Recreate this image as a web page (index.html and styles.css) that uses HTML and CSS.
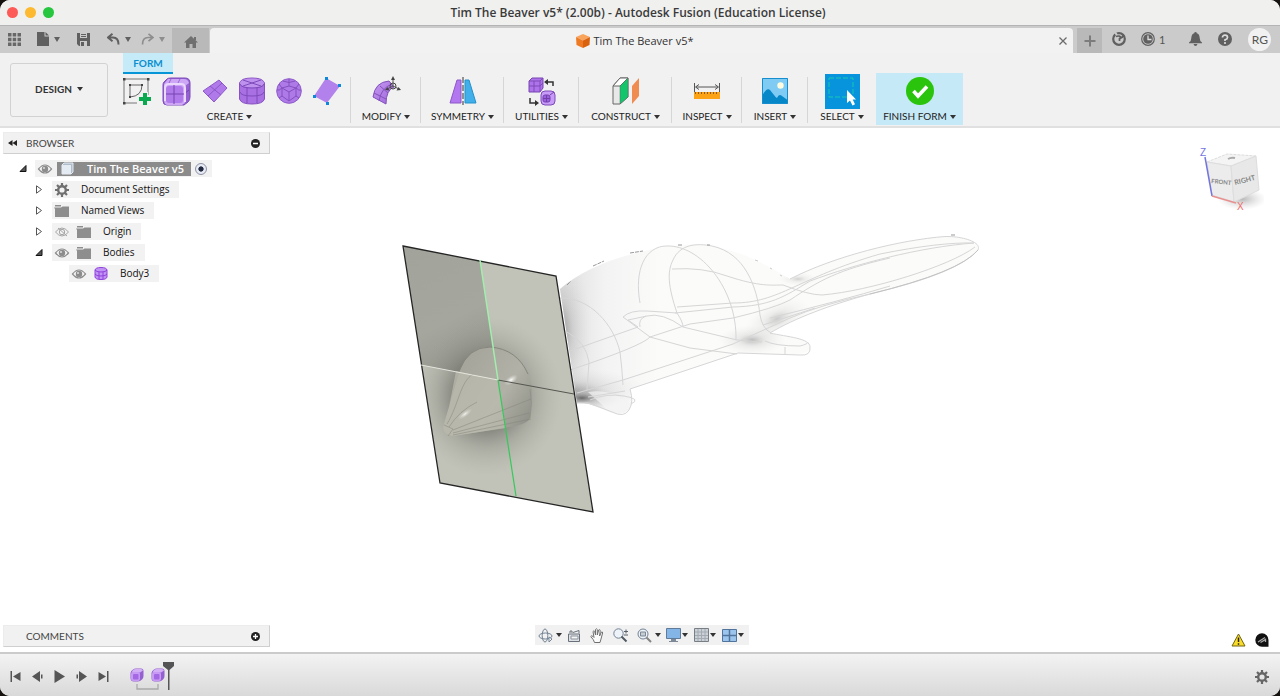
FILE: index.html
```html
<!DOCTYPE html>
<html lang="en">
<head>
<meta charset="utf-8">
<title>Tim The Beaver v5* (2.00b) - Autodesk Fusion (Education License)</title>
<link rel="stylesheet" href="styles.css">
</head>
<body>
<svg class="defs" aria-hidden="true">
  <defs>
    <linearGradient id="purple" x1="0" y1="0" x2="1" y2="1"><stop offset="0" stop-color="#c79bf2"/><stop offset="1" stop-color="#9b62d8"/></linearGradient>
    <symbol id="eye" viewBox="0 0 14 10"><path d="M.5 5Q7-3 13.5 5Q7 13 .5 5Z" fill="none" stroke="#8c8c8c" stroke-width="1.2"/><circle cx="7" cy="5" r="3.2" fill="#8c8c8c"/><circle cx="6" cy="4" r="1" fill="#ddd"/></symbol>
    <symbol id="eye-off" viewBox="0 0 14 10"><path d="M.5 5Q7-3 13.5 5Q7 13 .5 5Z" fill="none" stroke="#a5a5a5"/><circle cx="7" cy="5" r="2.7" fill="none" stroke="#a5a5a5"/><path d="M3 1l9 8" stroke="#a5a5a5"/></symbol>
    <symbol id="folder" viewBox="0 0 16 12"><path d="M1 0h6v1.500H1zM0 2.500h7l1.500-1H15V12H1V4z" fill="#8e8e8e"/></symbol>
    <symbol id="gear" viewBox="0 0 14 14"><circle cx="7" cy="7" r="3.800" fill="none" stroke="currentColor" stroke-width="2.400"/><path d="M7 0v3M7 11v3M0 7h3M11 7h3M2 2l2.200 2.200M9.800 9.800L12 12M12 2L9.800 4.200M4.200 9.800L2 12" stroke="currentColor" stroke-width="2.200"/></symbol>
    <symbol id="formbox" viewBox="0 0 14 14"><path d="M3 1.500Q4 .5 6 .5h5q2.500 0 2.500 2.500v5q0 2-1.500 3.500Q10 13.500 8 13.500H4Q.5 13.500.5 10V5q0-2 2.500-3.500z" fill="#9560d0"/><path d="M3 2Q4 1 6 1h5q1.500 0 2 1.500L10 4.500H1.500z" fill="#d3b0f6"/><rect x="1" y="4" width="9" height="9" rx="2" fill="#c79bf3"/><rect x="3" y="6" width="5.500" height="5.500" rx="1" fill="#a468e4"/></symbol>
  </defs>
</svg>
<div class="window">
  <header class="titlebar">
    <div class="lights"><button class="light red" aria-label="Close"></button><button class="light amber" aria-label="Minimise"></button><button class="light green" aria-label="Zoom"></button></div>
    <h1>Tim The Beaver v5* (2.00b) - Autodesk Fusion (Education License)</h1>
  </header>

  <div class="appbar">
    <div class="quick">
      <button aria-label="Data panel"><svg width="13" height="13" viewBox="0 0 13 13"><path d="M0 0h3.500v3.500H0zM4.700 0h3.500v3.500H4.700zM9.500 0H13v3.500H9.500zM0 4.700h3.500v3.500H0zM4.700 4.700h3.500v3.500H4.700zM9.500 4.700H13v3.500H9.500zM0 9.500h3.500V13H0zM4.700 9.500h3.500V13H4.700zM9.500 9.500H13V13H9.500z" fill="#686868"/></svg></button>
      <button class="file" aria-label="File"><svg width="12" height="14" viewBox="0 0 12 14"><path d="M0 0h7.500v4.500H12V14H0zM8.500 0L12 3.500H8.500z" fill="#606060"/></svg><i class="caret"></i></button>
      <button class="save" aria-label="Save"><svg width="13" height="13" viewBox="0 0 13 13"><path d="M0 0h13v13H2L0 11z" fill="#606060"/><path d="M3 0h7v5H3zM3 8h7v5H3z" fill="#cbcbcb"/><path d="M4 1.500h5M4 3.500h5" stroke="#606060"/><path d="M4 9h3v4H4z" fill="#606060"/></svg></button>
      <button class="undo" aria-label="Undo"><svg width="13" height="12" viewBox="0 0 13 12"><path d="M5.500 .8L1 4.500l4.500 3.700M1.500 4.500H6q5.500 0 5.500 7" fill="none" stroke="#606060" stroke-width="2"/></svg><i class="caret"></i></button>
      <button class="redo" aria-label="Redo"><svg width="13" height="12" viewBox="0 0 13 12"><path d="M7.500 .8L12 4.500 7.500 8.200M11.500 4.500H7q-5.500 0-5.500 7" fill="none" stroke="#8e8e8e" stroke-width="1.700"/></svg><i class="caret faint"></i></button>
    </div>
    <button class="home" aria-label="Home"><svg width="14" height="12" viewBox="0 0 14 12"><path d="M7 0L14 6.500h-2V12H8.500V8h-3v4H2V6.500H0zM10 1h2v3h-2z" fill="#707070"/></svg></button>
    <div class="doctab">
      <svg width="14" height="14" viewBox="0 0 14 14"><path d="M7 0l7 3-7 3.500L0 3z" fill="#f9a45c"/><path d="M0 3l7 3.500V14l-6.500-3z" fill="#ef7a24"/><path d="M14 3L7 6.500V14l6.500-3z" fill="#d9620f"/></svg>
      <span>Tim The Beaver v5*</span>
      <button class="close" aria-label="Close tab"><svg width="8" height="8" viewBox="0 0 8 8"><path d="M.5.500l7 7M7.500.500l-7 7" stroke="#6c6c6c" stroke-width="1.300"/></svg></button>
    </div>
    <button class="plus" aria-label="New design"><svg width="12" height="12" viewBox="0 0 12 12"><path d="M6 .500v11M.500 6h11" stroke="#7c7c7c" stroke-width="2"/></svg></button>
    <div class="account">
      <button aria-label="Extensions"><svg width="14" height="14" viewBox="0 0 14 14"><circle cx="7" cy="7" r="5.800" fill="none" stroke="#606060" stroke-width="2.200"/><path d="M7 7L3 0" stroke="#cbcbcb" stroke-width="2"/><path d="M4 4.500q4-1.500 5 1.500l3-3M7.500 9V6.500L11 5" fill="none" stroke="#606060" stroke-width="1.700"/></svg></button>
      <button class="jobs" aria-label="Job status"><svg width="14" height="14" viewBox="0 0 14 14"><circle cx="7" cy="7" r="6.300" fill="none" stroke="#606060" stroke-width="1.200"/><circle cx="7" cy="7" r="4.800" fill="#606060"/><path d="M7 3.500V7.500h3.500" stroke="#ddd" stroke-width="1.300" fill="none"/></svg>1</button>
      <button class="bell" aria-label="Notifications"><svg width="13" height="14" viewBox="0 0 13 14"><path d="M6.500 0q1.200 0 1.300 1.200Q10.500 2 10.700 6q0 3 2.300 4.500v.7H0v-.7Q2.300 9 2.300 6 2.500 2 5.200 1.200 5.300 0 6.500 0zM4.500 12h4q-.5 2-2 2t-2-2z" fill="#606060"/></svg></button>
      <button class="help" aria-label="Help"><svg width="14" height="14" viewBox="0 0 14 14"><circle cx="7" cy="7" r="7" fill="#606060"/><path d="M4.500 5.500Q4.500 3.200 7 3.200t2.500 2.200Q9.500 7 7 7.800V9" stroke="#ddd" stroke-width="1.700" fill="none"/><circle cx="7" cy="11" r="1.100" fill="#ddd"/></svg></button>
      <button class="avatar">RG</button>
    </div>
  </div>

  <div class="ribbon">
    <button class="workspace">DESIGN<i class="caret dark"></i></button>
    <div class="tools">
      <div class="tabs" role="tablist"><button class="formtab" role="tab" aria-selected="true">FORM</button></div>
      <div class="groups">
        <section class="group create">
          <div class="icons">
            <button aria-label="Create sketch"><svg width="29" height="29" viewBox="0 0 29 29"><path d="M2 2h24v24H2z" fill="none" stroke="#777"/><path d="M1 1h2.500v2.500H1zM25 1h2.500v2.500H25zM1 25h2.500v2.500H1z" fill="#444"/><path d="M8 20V8h12Q20 19 8 20z" fill="none" stroke="#666"/><path d="M7 7h2v2H7zM19 7h2v2h-2zM7 19h2v2H7z" fill="#444"/><path d="M19 15h7v3h3v11H15V18h4z" fill="#f1f1f1"/><path d="M21 16h4v4h4v4h-4v4h-4v-4h-4v-4h4z" fill="#0aa84f"/></svg></button>
            <button aria-label="Box"><svg width="29" height="29" viewBox="0 0 29 29"><path d="M5 2q1-1 4-1h14q5 0 5 5v14q0 3-2 5l-4 3H5q-4 0-4-4V8q0-2 1-3z" fill="#9560d2" stroke="#7d4cba"/><path d="M2 7l4-5h16q4 0 5 4l-4 3v17l-3 2H6q-4 0-4-5z" fill="#cda7f5"/><rect x="4" y="9" width="17" height="17" rx="3" fill="#b07aea"/><path d="M12 8v19M2 17h20l5-4" fill="none" stroke="#7642b2"/><path d="M9 2L6 8M18 2l-3 6M27 8l-4 2" fill="none" stroke="#9a68d3"/><path d="M3 24V11q0-4 4-4h12q4 0 4 4v14" fill="none" stroke="#ead8fd" stroke-width="2"/></svg></button>
            <button aria-label="Plane"><svg width="26" height="26" viewBox="0 0 26 26"><path d="M17 2l8 8-13 14L1 13z" fill="#b07aea" stroke="#8e59ca"/><path d="M8 8l11 9M6 18L20 5" stroke="#8a57c5"/></svg></button>
            <button aria-label="Cylinder"><svg width="26" height="28" viewBox="0 0 26 28"><path d="M.5 6Q2 1 13 1t12.500 5v16Q24 27 13 27T.5 22z" fill="#a870e2" stroke="#8752c1"/><ellipse cx="13" cy="6" rx="12" ry="4.500" fill="#bd91ed"/><path d="M1 7q1 4 12 4t12-4M1 15q1 4 12 4t12-4M8 10v16M18 10v16M4 3l18 6M22 3L4 9" fill="none" stroke="#7f4bbb"/></svg></button>
            <button aria-label="Sphere"><svg width="26" height="26" viewBox="0 0 26 26"><circle cx="13" cy="13" r="12.300" fill="#ae7ae8" stroke="#8e5cc9"/><path d="M13 8l7 2v8l-7 5-7-5v-8zM13 8V1M13 23v-9M6 10l7 4 7-4M6 10L3 6M20 10l3-4M6 18l-3 2M20 18l3 2M7 3q6 3 12 0M1 12q2 1 5-2M25 12q-2 1-5-2" fill="none" stroke="#8450bd"/></svg></button>
            <button aria-label="Face"><svg width="28" height="28" viewBox="0 0 28 28"><path d="M13 1l14 8-13 17L1 19z" fill="#b381ec"/><path d="M12 0h3v3h-3zM25 7h3v3h-3zM0 18h3v3H0zM13 25h3v3h-3z" fill="#0d86db"/></svg></button>
          </div>
          <button class="label">CREATE<i class="caret dark"></i></button>
        </section>
        <section class="group w70"><div class="icons"><button aria-label="Edit form"><svg width="29" height="30" viewBox="0 0 29 30"><path d="M1 21Q3 6 17 5l5 6q-8 3-8 17z" fill="url(#purple)" stroke="#8250bd"/><path d="M8 10l8 7M7 25Q9 12 20 8M2 17l12 6" fill="none" stroke="#8450bd"/><circle cx="21" cy="10" r="3" fill="none" stroke="#444"/><path d="M21 10V3M21 10l6 3M21 10l-6 3" stroke="#555"/><path d="M21 0l-2 4h4zM29 14l-4.500.500 2-3.500zM13 14l4.500.500-2-3.500z" fill="#444"/></svg></button></div><button class="label">MODIFY<i class="caret dark"></i></button></section>
        <section class="group w83"><div class="icons"><button aria-label="Mirror"><svg width="28" height="28" viewBox="0 0 28 28"><path d="M8 3h4v23H1z" fill="#b377f0" stroke="#8c59c8"/><path d="M16 3h4l7 23H16z" fill="#41afe9" stroke="#2491cc"/><path d="M14 0v28" stroke="#333" stroke-dasharray="6 2"/></svg></button></div><button class="label">SYMMETRY<i class="caret dark"></i></button></section>
        <section class="group w75"><div class="icons"><button aria-label="Convert"><svg width="28" height="29" viewBox="0 0 28 29"><path d="M1 4l3-3h11v10l-3 4H1z" fill="#ae72ea" stroke="#7745b0"/><path d="M1 4h11v11M12 4l3-3M6 4v11M1 9h11l3-3" fill="none" stroke="#7d4ab8"/><rect x="13" y="14" width="14" height="14" rx="4" fill="#c99bf8" stroke="#7e4ab9"/><rect x="15" y="18" width="7" height="7" rx="2" fill="#9c60df" stroke="#7441b0"/><path d="M18.500 18v7M15 21.500h7M22 18l4-3" stroke="#7140a9"/><path d="M25 9V5h-6M2 21v5h6" fill="none" stroke="#333" stroke-width="1.500"/><path d="M20 2v6l-4-3zM7 23v6l4-3z" fill="#333"/></svg></button></div><button class="label">UTILITIES<i class="caret dark"></i></button></section>
        <section class="group w93"><div class="icons"><button aria-label="Offset plane"><svg width="28" height="28" viewBox="0 0 28 28"><path d="M1 9l7-8h8v19l-8 7H1z" fill="#e8e8e8" stroke="#666"/><path d="M8 9H1l7-8h8z" fill="#fff" stroke="#666"/><path d="M8 9l8-8v19l-8 7z" fill="#13c56b" stroke="#666" stroke-width=".5"/><path d="M20 9l7-8v18l-7 8z" fill="#f08b51"/></svg></button></div><button class="label">CONSTRUCT<i class="caret dark"></i></button></section>
        <section class="group w70"><div class="icons"><button aria-label="Measure"><svg width="26" height="17" viewBox="0 0 26 17"><path d="M.500 0v9M25.500 0v9M2 4h22M5 1.500L1.500 4 5 6.500M21 1.500L24.500 4 21 6.500" fill="none" stroke="#555"/><path d="M0 9h26v7H0z" fill="#fba315"/><path d="M1 10h24" stroke="#8a5a10" stroke-width="2" stroke-dasharray="1 2"/></svg></button></div><button class="label">INSPECT<i class="caret dark"></i></button></section>
        <section class="group w66"><div class="icons"><button aria-label="Canvas"><svg width="26" height="26" viewBox="0 0 26 26"><path d="M0 0h26v26H0z" fill="#7fcbf3"/><path d="M.500 17Q5 9 8 12l4 5q2 3 3 3 2-5 5-2l5.500 4v3.500H.500z" fill="#0587c8"/><circle cx="18.500" cy="7.500" r="3.200" fill="#fffbe0"/><path d="M.500.500h25v25H.500z" fill="none" stroke="#168dcc"/></svg></button></div><button class="label">INSERT<i class="caret dark"></i></button></section>
        <section class="group w68 last"><div class="icons"><button aria-label="Select"><svg width="35" height="35" viewBox="0 0 35 35"><path d="M0 0h35v35H0z" fill="#0794dc"/><path d="M4 4h24v19H4z" fill="none" stroke="#19c8b1" stroke-dasharray="5 2"/><path d="M22 16v13l3-2.500 2.500 5 2.500-1.200-2.300-4.800H31z" fill="#fff"/></svg></button></div><button class="label">SELECT<i class="caret dark"></i></button></section>
        <section class="group finish last"><div class="icons"><button aria-label="Finish form"><svg width="28" height="28" viewBox="0 0 28 28"><circle cx="14" cy="14" r="14" fill="#2ac40c"/><path d="M7.500 14l4.500 5 9-9.500" fill="none" stroke="#fff" stroke-width="3.600"/></svg></button></div><button class="label">FINISH FORM<i class="caret dark"></i></button></section>
      </div>
    </div>
  </div>

  <main class="viewport">
    <svg class="model" width="600" height="290" viewBox="390 230 600 290" role="img" aria-label="Beaver model">
      <defs>
        <linearGradient id="bodyfill" x1="560" y1="0" x2="660" y2="0" gradientUnits="userSpaceOnUse"><stop offset="0" stop-color="#dedede"/><stop offset=".45" stop-color="#f3f3f3"/><stop offset="1" stop-color="#fbfbfa"/></linearGradient>
        <linearGradient id="quad" x1="410" y1="250" x2="470" y2="370" gradientUnits="userSpaceOnUse"><stop offset="0" stop-color="#a2a39a"/><stop offset=".6" stop-color="#a5a69d"/><stop offset="1" stop-color="#94958c"/></linearGradient>
        <radialGradient id="halo"><stop offset=".35" stop-color="#66675f" stop-opacity=".8"/><stop offset=".65" stop-color="#85867d" stop-opacity=".38"/><stop offset="1" stop-color="#a6a79d" stop-opacity="0"/></radialGradient>
        <radialGradient id="smoke"><stop offset="0" stop-color="#555" stop-opacity=".85"/><stop offset=".4" stop-color="#999" stop-opacity=".4"/><stop offset="1" stop-color="#ccc" stop-opacity="0"/></radialGradient>
        <linearGradient id="head" x1="455" y1="360" x2="535" y2="415" gradientUnits="userSpaceOnUse"><stop offset="0" stop-color="#a3a399"/><stop offset=".6" stop-color="#b1b1a7"/><stop offset="1" stop-color="#8f9087"/></linearGradient>
        <radialGradient id="shine"><stop offset="0" stop-color="#fff"/><stop offset="1" stop-color="#d5d5cd" stop-opacity="0"/></radialGradient>
        <clipPath id="bodyclip"><path d="M560 289C585 267 628 251 680 245C725 241 764 263 790 279C835 256 900 240 945 236.500C962 236 982 242 978 250C960 270 915 283 870 294C830 305 795 318 770 333C787 339 810 336 810 349C808 357 770 355 738 353L630 389C634 402 632 413 618 414C602 411 593 402 577 403z"/></clipPath>
        <clipPath id="planeclip"><path d="M403 246l153 30 37 236-153-29z"/></clipPath>
      </defs>
      <g clip-path="url(#bodyclip)">
        <path d="M550 230h440v190H550z" fill="url(#bodyfill)"/>
        <ellipse cx="574" cy="390" rx="72" ry="22" fill="url(#smoke)" opacity=".5"/>
        <ellipse cx="582" cy="398" rx="38" ry="13" fill="url(#smoke)"/>
        <ellipse cx="560" cy="330" rx="32" ry="75" fill="url(#smoke)" opacity=".7"/>
        <ellipse cx="752" cy="340" rx="34" ry="15" fill="url(#smoke)" opacity=".45"/>
        <ellipse cx="777" cy="319" rx="35" ry="18" fill="url(#smoke)" opacity=".35" transform="rotate(-25 777 319)"/>
        <ellipse cx="798" cy="279" rx="20" ry="7" fill="url(#smoke)" opacity=".3"/>
        <path d="M588 392q25-4 44 14l-4 8-20-4z" fill="#f4f4f4" opacity=".7"/>
      </g>
      <g fill="none" stroke="#d6d6d6" stroke-width="1">
        <path d="M640 303C634 270 645 246 667 246C700 245 737 288 736 340"/>
        <path d="M677 313C668 286 667 272 673 260C680 244 697 243 712 246C745 253 757 287 760 315Q762 328 771 333"/>
        <path d="M672 269Q703 267 727 276C760 287 772 285 783 285Q809 295 822 295C870 291 950 266 975 247"/>
        <path d="M677 307L733 303C780 303 797 278 880 254Q940 242 974 243"/>
        <path d="M675 313L733 307C770 306 784 297 810 281C856 264 920 247 974 243"/>
        <path d="M623 317Q630 310 647 311L677 313Q683 322 683 327M623 317L650 337Q642 346 570 370M628 320L647 316Q662 312 683 327L737 340L762 342"/>
        <path d="M640 327Q638 319 646 316M570 351L638 327L628 320M650 337L690 324L733 318Q775 308 790 300C820 280 838 270 890 258"/>
        <path d="M650 337L690 348L737 354M577 393L623 380L733 344L790 318Q820 305 870 294"/>
        <path d="M560 298C590 297 614 325 620 352Q622 368 623 385M567 332Q586 342 589 362L587 390M590 400Q606 393 624 396T631 404M588 397L625 391"/>
        <path d="M790 279C835 256 900 240 945 236.500C962 236 982 242 978 250C960 270 915 283 870 294C830 305 795 318 770 333C787 337 810 338 810 347Q811 356 800 355L738 353M770 318Q840 301 890 286M763 325Q785 318 815 308M765 341Q775 346 800 346Q808 344 808 342M785 347v7M738 353L630 389Q634 402 629 410T612 412Q600 407 588 403H577"/>
      </g>
      <path d="M870 294Q960 272 978 250" fill="none" stroke="#c2c2c2"/>
      <path d="M567 285l4-4M593 266l11-5M630 253l13-2M678 245h4M707 245h3M951 235h4" stroke="#999" stroke-dasharray="4 1"/>
      <path d="M755 260l3 1M770 268l2 1M780 275l2 1" stroke="#ccc"/>
      <g clip-path="url(#planeclip)">
        <path d="M403 246l153 30 37 236-153-29z" fill="#c1c2b8"/>
        <path d="M403 246l77 14 18 120-77-15z" fill="url(#quad)"/>
        <ellipse cx="486" cy="396" rx="76" ry="80" fill="url(#halo)"/>
      </g>
      <path d="M443 427L449 407L458 376Q467 346 490 347C515 348 531 367 532 392L530 418Q528 424 510 427L453 436Q443 435 443 427z" fill="url(#head)"/>
      <path d="M443 427L449 407L456 371L498 380L506 428L453 436Q443 435 443 427z" fill="#bdbcaf" opacity=".7"/>
      <path d="M459 371Q468 347 490 347Q517 349 528 374" fill="none" stroke="#85867d"/>
      <path d="M447 424C459 404 460 382 473 374M449 427Q459 411 477 402M453 430L531 399M453 433L529 413M453 435L531 419M444 425l9 4-5 7M530 389Q533 403 530 418" fill="none" stroke="#85867d" stroke-width="1" opacity=".5"/>
      <ellipse cx="465" cy="414" rx="9" ry="3" transform="rotate(-36 465 414)" fill="url(#shine)" opacity=".8"/>
      <ellipse cx="511" cy="380" rx="8" ry="4" transform="rotate(-35 511 380)" fill="url(#shine)"/>
      <path d="M403 246l153 30 37 236-153-29z" fill="none" stroke="#252525" stroke-width="1.300"/>
      <path d="M421 365l77 15" stroke="#e5e6dd"/><path d="M498 380l76 14" stroke="#55564f"/>
      <path d="M480 260l18 120" stroke="#a2efad" stroke-width="1.500"/><path d="M498 380l18 116" stroke="#32ca59" stroke-width="1.200"/>
    </svg>

    <div class="topside">
      <section class="browser">
        <header class="panel"><svg class="collapse" width="9" height="6" viewBox="0 0 9 6"><path d="M4.500 0v6L0 3zM9 0v6L4.500 3z" fill="#222"/></svg><h2>BROWSER</h2><button class="round" aria-label="Hide browser"><svg width="9" height="9" viewBox="0 0 9 9"><circle cx="4.500" cy="4.500" r="4.500" fill="#222"/><path d="M2 4.500h5" stroke="#fff" stroke-width="1.500"/></svg></button></header>
        <ul class="tree">
          <li class="l0"><svg class="tw" width="7" height="7" viewBox="0 0 7 7"><path d="M6.500.500v6h-6z" fill="#555" stroke="#111"/></svg><div class="chip root"><svg width="14" height="10"><use href="#eye"/></svg><span class="sel"><svg width="13" height="13" viewBox="0 0 13 13"><path d="M1 3l2-2h9v9l-2 2H1z" fill="#aebccb" stroke="#e6ebf2"/><path d="M1 3h9v9H1z" fill="#e5ebf3"/></svg>Tim The Beaver v5</span><input type="radio" checked aria-label="Activate Tim The Beaver v5"></div></li>
          <li class="l1"><svg class="tw" width="7" height="9" viewBox="0 0 7 9"><path d="M1 .800l5 3.700-5 3.700z" fill="#fff" stroke="#555"/></svg><div class="chip"><svg class="gear" width="14" height="14"><use href="#gear"/></svg><span>Document Settings</span></div></li>
          <li class="l1"><svg class="tw" width="7" height="9" viewBox="0 0 7 9"><path d="M1 .800l5 3.700-5 3.700z" fill="#fff" stroke="#555"/></svg><div class="chip"><svg width="16" height="12"><use href="#folder"/></svg><span>Named Views</span></div></li>
          <li class="l1"><svg class="tw" width="7" height="9" viewBox="0 0 7 9"><path d="M1 .800l5 3.700-5 3.700z" fill="#fff" stroke="#555"/></svg><div class="chip"><svg width="14" height="10"><use href="#eye-off"/></svg><svg class="second" width="16" height="12"><use href="#folder"/></svg><span>Origin</span></div></li>
          <li class="l1"><svg class="tw" width="7" height="7" viewBox="0 0 7 7"><path d="M6.500.500v6h-6z" fill="#555" stroke="#111"/></svg><div class="chip"><svg width="14" height="10"><use href="#eye"/></svg><svg class="second" width="16" height="12"><use href="#folder"/></svg><span>Bodies</span></div></li>
          <li class="l2"><div class="chip"><svg width="14" height="10"><use href="#eye"/></svg><svg class="second" width="13" height="13" viewBox="0 0 13 13"><path d="M.500 3Q1 .500 6.500.500t6 2.500v7q-.500 2.500-6 2.500T.500 10z" fill="#c194f4" stroke="#8f40dc"/><path d="M.500 3q1 2 6 2t6-2M.500 7q1 2 6 2t6-2M4.500 5v7.500M8.500 5v7.500" fill="none" stroke="#8f40dc"/></svg><span>Body3</span></div></li>
        </ul>
      </section>
      <svg class="cube" width="74" height="72" viewBox="1190 144 74 72" role="img" aria-label="View cube">
        <defs><radialGradient id="cubeshadow"><stop offset="0" stop-color="#999" stop-opacity=".7"/><stop offset="1" stop-color="#ccc" stop-opacity="0"/></radialGradient></defs>
        <ellipse cx="1242" cy="199" rx="25" ry="11" fill="url(#cubeshadow)"/>
        <path d="M1207 162l20-8 29 2-25 10z" fill="#f4f4f4" stroke="#ddd" stroke-dasharray="3 1"/>
        <path d="M1207 162l24 4 3 36-22-7z" fill="#ececec" stroke="#ddd"/>
        <path d="M1231 166l25-10 3 34-25 12z" fill="#e8e8e8" stroke="#ddd"/>
        <path d="M1228 159q3-2 7-1" fill="none" stroke="#aaa" stroke-width="2"/>
        <path d="M1205 157l7 39" stroke="#7474de" stroke-width="1.500"/><path d="M1212 196l24 7" stroke="#e89090" stroke-width="1.500"/>
        <g class="cubetext"><text x="1211" y="183" font-size="6" transform="rotate(6 1211 183)">FRONT</text><text x="1235" y="185" font-size="7" transform="rotate(-14 1235 185)">RIGHT</text></g>
        <text class="axis" x="1200" y="156" fill="#7474de">Z</text><text class="axis" x="1237" y="210" fill="#ef6b6b">X</text>
      </svg>
    </div>

    <div class="bottomside">
      <div class="panel comments"><h2>COMMENTS</h2><button class="round" aria-label="Show comments"><svg width="9" height="9" viewBox="0 0 9 9"><circle cx="4.500" cy="4.500" r="4.500" fill="#222"/><path d="M2 4.500h5M4.500 2v5" stroke="#fff" stroke-width="1.300"/></svg></button></div>
      <nav class="navbar" aria-label="Navigation">
        <button aria-label="Orbit"><svg width="15" height="15" viewBox="0 0 15 15" fill="none" stroke="#738495"><ellipse cx="7.500" cy="8" rx="6.500" ry="3"/><ellipse cx="7" cy="7.500" rx="2.800" ry="6.500"/><path d="M11 9l3 2-3 3z" fill="#fff"/></svg><i class="caret dark"></i></button>
        <button aria-label="Look at"><svg width="14" height="13" viewBox="0 0 14 13"><path d="M1.500 5h11v7.500h-11z" fill="#dfe2e5" stroke="#68717b"/><path d="M3 4V2h2v2M6 3.500l6-2v3" fill="none" stroke="#68717b"/><path d="M4 7h7v3H4z" fill="#f6f6f6" stroke="#8b939b"/></svg></button>
        <button aria-label="Pan"><svg width="14" height="15" viewBox="0 0 14 15"><path d="M4.500 14.500Q4 12 .8 8.500q.7-1.500 2.200 0l1 1-1-6q1-1.500 1.700 0l.8 3.500V1.500q1-1.500 1.800 0V7L8.700 2q1.300-1 1.500.5L9.600 8l1.800-4q1.300-.5 1.200 1L11 11l-1 3.500z" fill="#fbfbfb" stroke="#707070"/></svg></button>
        <button aria-label="Zoom"><svg width="15" height="15" viewBox="0 0 15 15"><circle cx="5.500" cy="5.500" r="4.700" fill="#edf3f8" stroke="#728294"/><path d="M8.500 8.500l5 5" stroke="#505862" stroke-width="2"/><path d="M11 3.500h4M13 1.500v4M11 7h4" stroke="#57616b"/></svg></button>
        <button aria-label="Fit"><svg width="15" height="15" viewBox="0 0 15 15"><circle cx="6" cy="6" r="5" fill="#edf3f8" stroke="#728294"/><path d="M3.500 4h5v4h-5z" fill="#c6ccd3" stroke="#7d8894"/><path d="M9.500 9.500l4.500 4.500" stroke="#848484" stroke-width="2"/></svg><i class="caret dark"></i></button>
        <button aria-label="Display settings"><svg width="15" height="14" viewBox="0 0 15 14"><path d="M.500.500h14v10H.500z" fill="#84b5e7" stroke="#607b99"/><path d="M5 11h5v2h2v1H3v-1h2z" fill="#7c8997"/></svg><i class="caret dark tight"></i></button>
        <button aria-label="Grid and snaps"><svg width="15" height="14" viewBox="0 0 15 14"><path d="M.500.500h14v13H.500z" fill="#ccd1d7" stroke="#777e86"/><path d="M4 1v12M7.500 1v12M11 1v12M1 4h13M1 7.500h13M1 10.500h13" stroke="#a3aab2"/></svg><i class="caret dark tight"></i></button>
        <button aria-label="Viewports"><svg width="15" height="13" viewBox="0 0 15 13"><path d="M.500.500h14v12H.500z" fill="#9cc5ed" stroke="#50749b"/><path d="M7.500 0v13M0 6.500h15" stroke="#50749b" stroke-width="1.500"/></svg><i class="caret dark tight"></i></button>
      </nav>
      <div class="status">
        <svg width="15" height="14" viewBox="0 0 15 14"><path d="M7.500 1L14 13H1z" fill="#fbdc28" stroke="#6e6410" stroke-linejoin="round"/><path d="M7.500 4.500v4.500M7.500 10.200v1.600" stroke="#222" stroke-width="1.500"/></svg>
        <svg width="14" height="14" viewBox="0 0 14 14"><path d="M7 .300a6.700 6.700 0 1 0 0 13.400H13.500V7A6.600 6.600 0 0 0 7 .300z" fill="#111"/><path d="M3 9l7-4.500M5.500 9.500l5-3V9" fill="none" stroke="#aaa" stroke-width="1.300"/></svg>
      </div>
    </div>
  </main>

  <footer class="timeline">
    <div class="play">
      <button aria-label="Go to start"><svg width="11" height="11" viewBox="0 0 11 11"><path d="M.5 0h1.500v11H.5zM10.500 1v9L3 5.500z" fill="#555"/></svg></button>
      <button aria-label="Step back"><svg width="11" height="11" viewBox="0 0 11 11"><path d="M8 0v11L0 5.500zM9 3.500h1.500v4H9z" fill="#555"/></svg></button>
      <button aria-label="Play"><svg width="11" height="13" viewBox="0 0 11 13"><path d="M.5 0L11 6.500.5 13z" fill="#555"/></svg></button>
      <button aria-label="Step forward"><svg width="11" height="11" viewBox="0 0 11 11"><path d="M3 0v11l8-5.500zM.500 3.500H2v4H.500z" fill="#555"/></svg></button>
      <button aria-label="Go to end"><svg width="11" height="11" viewBox="0 0 11 11"><path d="M9 0h1.500v11H9zM.500 1v9L8 5.500z" fill="#555"/></svg></button>
    </div>
    <svg class="track" width="46" height="34" viewBox="0 0 46 34" role="img" aria-label="Timeline features"><use href="#formbox" x="1" y="8" width="14" height="14"/><use href="#formbox" x="22" y="8" width="14" height="14"/><path d="M8 24v5h21v-5" fill="none" stroke="#a9a9a9" stroke-width="1.300"/><path d="M34 2h11v4l-4.500 4v20H39V10l-5-4z" fill="#555"/></svg>
    <button class="prefs" aria-label="Timeline settings"><svg width="14" height="14"><use href="#gear"/></svg></button>
  </footer>
</div>
</body>
</html>
```
FILE: styles.css
```css
* { box-sizing: border-box; }
body { margin: 0; background: #16120f; font-family: "Lato", "Open Sans", sans-serif; color: #333; }
button { border: 0; padding: 0; margin: 0; background: none; font: inherit; color: inherit; display: flex; align-items: center; }
h1, h2 { margin: 0; font-weight: normal; }
svg { display: block; flex: none; }
.defs { position: absolute; width: 0; height: 0; }
.caret { border: 3px solid transparent; border-top: 5px solid #606060; border-bottom: 0; margin-left: 5px; }
.caret.faint { border-top-color: #8e8e8e; }
.caret.dark { border-top-color: #333; border-top-width: 4px; margin-left: 3px; }

.window { height: 100vh; display: flex; flex-direction: column; border-radius: 10px; overflow: hidden; background: #fff; }

.titlebar { display: flex; align-items: center; height: 26px; background: #f0f0ef; border-bottom: 1px solid #b4b4b4; flex: none; }
.lights { display: flex; gap: 7px; padding-left: 7px; width: 80px; flex: none; }
.light { width: 11px; height: 11px; border-radius: 50%; }
.red { background: #fc5b57; }
.amber { background: #fdb92f; }
.green { background: #27c63f; }
.titlebar h1 { flex: 1; padding-right: 84px; text-align: center; font: 600 12px/16px "Open Sans", sans-serif; color: #3a3a3a; white-space: nowrap; }

.appbar { display: flex; height: 27px; flex: none; background: #cbcbcb; padding-top: 2px; }
.quick { display: flex; align-items: center; width: 172px; padding: 0 0 3px 8px; flex: none; }
.file { margin-left: 16px; }
.save { margin-left: 17px; }
.undo { margin-left: 17px; }
.redo { margin-left: 10px; }
.home { width: 37px; justify-content: center; background: #b9b9b9; padding-top: 3px; flex: none; }
.doctab { flex: 1; display: flex; align-items: center; background: #f2f2f2; border-radius: 4px 4px 0 0; font: 11px/16px "Open Sans", sans-serif; color: #333; margin-left: 1px; }
.doctab > svg { margin-left: auto; margin-right: 4px; }
.doctab .close { margin-left: auto; margin-right: 6px; }
.plus { width: 25px; margin-left: 4px; background: #b9b9b9; justify-content: center; }
.account { display: flex; align-items: center; width: 178px; padding: 0 0 3px 10px; flex: none; }
.jobs { margin-left: 15px; gap: 4px; font-size: 11px; color: #555; }
.bell { margin-left: 24px; }
.help { margin-left: 16px; }
.avatar { margin-left: 16px; width: 23px; height: 23px; border-radius: 50%; background: #f1f1f1; justify-content: center; font-size: 12px; color: #555; }

.ribbon { display: flex; flex: none; background: #f1f1f1; border-bottom: 2px solid #e0e0e0; height: 75px; }
.workspace { width: 98px; height: 54px; margin: 10px 0 0 10px; border: 1px solid #d2d2d2; border-radius: 3px; justify-content: center; font-size: 10px; font-weight: 700; flex: none; padding-bottom: 2px; }
.workspace .caret.dark { margin-left: 5px; }
.tools { flex: 1; display: flex; flex-direction: column; }
.tabs { display: flex; padding-left: 15px; }
.formtab { height: 21px; width: 50px; justify-content: center; background: #c5eaf8; border-bottom: 2px solid #0696d7; color: #0a8fd0; font-size: 10px; font-weight: 700; }
.groups { display: flex; height: 52px; margin-top: -1px; }
.group { display: flex; flex-direction: column; align-items: center; flex: none; height: 52px; background: linear-gradient(#d6d6d6, #d6d6d6) right 4px / 1px 46px no-repeat; }
.group.last { background-image: none; }
.icons { height: 36px; display: flex; align-items: center; justify-content: center; }
.label { height: 15px; font-size: 10px; line-height: 15px; white-space: nowrap; color: #222; }
.create { width: 243px; }
.create .icons { gap: 11px; padding-left: 3px; }
.w70 { width: 70px; }
.w83 { width: 83px; }
.w75 { width: 75px; }
.w93 { width: 93px; }
.w66 { width: 66px; }
.w68 { width: 68px; }
.group.finish { width: 87px; background: #c5e9f7; }

.viewport { flex: 1; min-height: 0; position: relative; display: flex; flex-direction: column; justify-content: space-between; }
.model { position: absolute; left: 390px; top: 102px; }
.topside, .bottomside { position: relative; display: flex; }
.topside { justify-content: space-between; padding: 4px 16px 0 3px; }
.panel { display: flex; align-items: center; width: 267px; height: 22px; padding: 0 9px 0 4px; background: #f1f1f1; border: 1px solid #ececec; border-right-color: #cfcfcf; border-bottom-color: #cfcfcf; }
.panel h2 { font-size: 10px; line-height: 14px; color: #444; margin-left: 9px; flex: 1; }
.comments h2 { margin-left: 18px; }
.tree { list-style: none; margin: 4px 0 0; padding: 0; font: 10px/17px "Open Sans", sans-serif; color: #111; }
.tree li { display: flex; align-items: center; height: 21px; }
.tw { width: 8px; margin-right: 8px; }
.l0 { padding-left: 16px; }
.l1 { padding-left: 32px; }
.l2 { padding-left: 66px; }
.chip { display: flex; align-items: center; height: 17px; background: #f2f2f2; padding: 0 10px 0 2px; white-space: nowrap; }
.l1 .chip { margin-left: 1px; }
.chip > svg:first-child { width: 16px; }
.chip > span { margin-left: 11px; }
.chip .second { margin-left: 6px; width: 16px; }
.gear { color: #707070; }
.root { padding: 0 5px 0 2px; }
.chip > .sel { display: flex; align-items: center; gap: 13px; height: 14px; margin-left: 4px; padding: 0 7px 0 4px; background: #8b8b8b; color: #fff; font-size: 11px; font-weight: 600; }
.root input { appearance: none; width: 12px; height: 12px; margin: 0 0 0 4px; border: 1px solid #8d93a4; border-radius: 50%; background: radial-gradient(#222a40 32%, #e8ebf5 42%); }
.cube { margin-top: 12px; }
.cubetext { font-family: "Lato", sans-serif; font-weight: 700; fill: #858585; }
.axis { font: 10px "Liberation Sans", sans-serif; }

.bottomside { padding: 0 11px 5px 3px; align-items: flex-end; justify-content: space-between; }
.navbar { display: flex; align-items: center; height: 20px; margin: 0 auto 2px 265px; padding: 0 8px 0 3px; gap: 9px; background: #f1f1f1; }
.navbar .caret { margin-right: -4px; }
.navbar .caret.tight { margin-left: 1px; margin-right: -3px; }
.status { display: flex; gap: 9px; }

.timeline { flex: none; display: flex; align-items: center; height: 44px; border-top: 2px solid #cbcbcb; background: linear-gradient(#f3f3f3, #d9d9d9); color: #666; padding: 3px 11px 0 10px; }
.play { display: flex; align-items: center; gap: 11px; }
.track { margin-left: 20px; }
.prefs { margin-left: auto; }
```
